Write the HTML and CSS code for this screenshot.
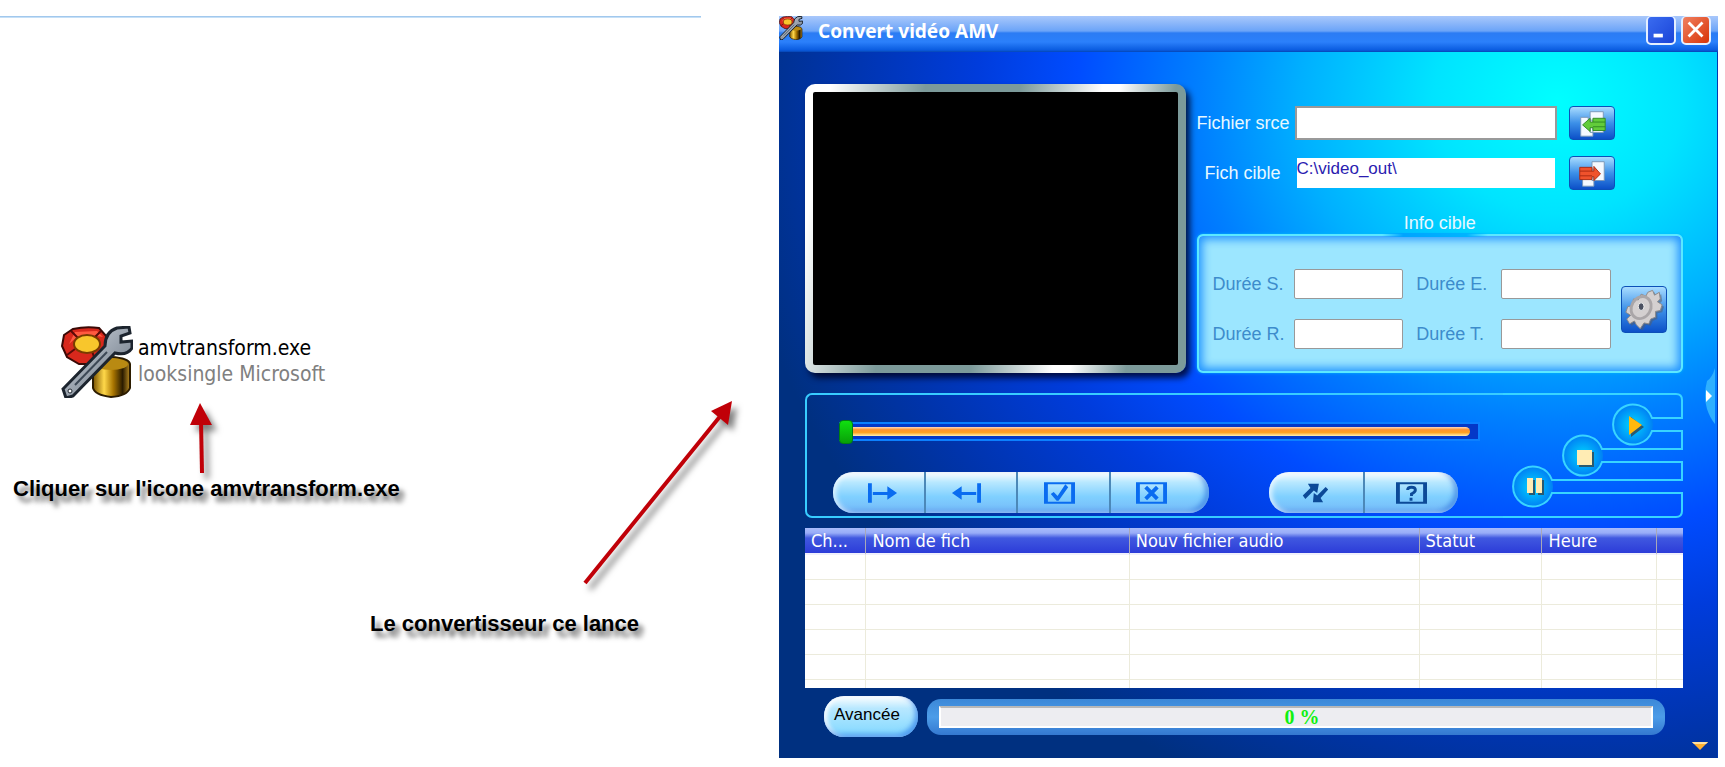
FILE: index.html
```html
<!DOCTYPE html>
<html lang="fr">
<head>
<meta charset="UTF-8" />
<meta name="viewport" content="width=device-width, initial-scale=1" />
<title>Convert vidéo AMV</title>
<link rel="stylesheet" href="styles.css">
</head>
<body>
<svg class="defs" aria-hidden="true">
  <defs>
    <linearGradient id="can" x1="0" x2="1">
      <stop offset="0" stop-color="#7a5200" />
      <stop offset="0.3" stop-color="#ffd84a" />
      <stop offset="0.55" stop-color="#a87400" />
      <stop offset="0.8" stop-color="#2a1b00" />
      <stop offset="1" stop-color="#b88a20" />
    </linearGradient>
    <linearGradient id="steel" x1="0" y1="0" x2="1" y2="1">
      <stop offset="0" stop-color="#d8dee6" />
      <stop offset="1" stop-color="#5e6a78" />
    </linearGradient>
    <radialGradient id="orb">
      <stop offset="0" stop-color="#00d8ff" />
      <stop offset="1" stop-color="#0080f4" />
    </radialGradient>
    <symbol id="app-icon" viewBox="0 0 72 72">
      <path d="M12 3 Q25 0 38 2 L47 12 L46 28 L36 38 L18 38 L6 31 L1 20 L3 9 Z" fill="#d8281c" stroke="#3a0906" stroke-width="2" />
      <path d="M14 6 L36 5 L42 11 L30 9 L16 11 L8 18 Z" fill="#ff5a40" />
      <path d="M10 5 L17 12 M40 5 L34 11 M6 29 L14 23 M35 37 L31 25" stroke="#5a0a08" stroke-width="2" />
      <ellipse cx="26" cy="18" rx="13" ry="9" fill="#f8c62c" stroke="#7a3c00" stroke-width="2" />
      <path d="M32 40 Q33 32 50 31 Q68 32 69 38 V62 Q66 70 50 71 Q34 69 32 62 Z" fill="url(#can)" stroke="#2c1c00" stroke-width="2" />
      <ellipse cx="50" cy="38" rx="17" ry="6" fill="#b98a12" />
      <path d="M2 63 L44 20 Q44 6 56 2 L68 1 L69 7 L60 10 L60 16 L71 15 L71 22 Q66 30 54 27 L12 70 L5 72 Z" fill="url(#steel)" stroke="#1c242e" stroke-width="3" />
      <path d="M14 59 L46 26" stroke="#3c4856" stroke-width="2" />
      <circle cx="9" cy="65" r="2" fill="#fff" stroke="#1c242e" />
    </symbol>
  </defs>
</svg>

<main class="page">
  <section class="desktop">
    <div class="file">
      <svg class="file-icon" aria-hidden="true"><use href="#app-icon" /></svg>
      <div class="file-text">
        <div>amvtransform.exe</div>
        <div class="file-vendor">looksingle Microsoft</div>
      </div>
    </div>
    <p class="caption">Cliquer sur l'icone amvtransform.exe</p>
    <p class="caption caption-launch">Le convertisseur ce lance</p>
    <svg class="arrows" viewBox="0 0 779 767" preserveAspectRatio="xMinYMin meet" aria-hidden="true">
      <path d="M202 473 L201 420" stroke-width="4" />
      <path d="M200 403 L212 425 L190 425 Z" class="arrow-head" />
      <path d="M585 583 L722 414" stroke-width="4" />
      <path d="M732 401 L728 425 L711 411 Z" class="arrow-head" />
    </svg>
  </section>

  <section class="window">
    <header class="titlebar">
      <svg class="title-icon" aria-hidden="true"><use href="#app-icon" /></svg>
      <h1>Convert vidéo AMV</h1>
      <button class="win-btn" type="button" aria-label="Réduire">
        <svg viewBox="0 0 28 28"><path d="M6 18 H16 V22 H6 Z" fill="#fff" /></svg>
      </button>
      <button class="win-btn win-close" type="button" aria-label="Fermer">
        <svg viewBox="0 0 28 28"><path d="M6 6 L21 21 M21 6 L6 21" stroke="#fff" stroke-width="3" /></svg>
      </button>
    </header>

    <div class="client">
      <div class="top">
        <div class="screen"></div>

        <div class="settings">
          <div class="path-row">
            <label for="src">Fichier srce</label>
            <input id="src" class="path" type="text">
            <button class="tool" type="button" aria-label="Ouvrir la source">
              <svg viewBox="0 0 46 34">
                <path d="M21 5 H35 V27 H21 Z M11 11 H19 V14 H24 V31 H11 Z" fill="#f4f9ff" stroke="#7a96b8" />
                <path d="M13 19 L21 12 V16 H24 V12 H37 V25 H24 V22 H21 V26 Z" fill="#62cc3a" stroke="#2f8a22" />
                <path d="M24 16 H37 M24 21 H37" stroke="#2f8a22" />
              </svg>
            </button>
          </div>
          <div class="path-row">
            <label for="dst">Fich cible</label>
            <input id="dst" class="path path-dst" type="text" value="C:\video_out\">
            <button class="tool" type="button" aria-label="Choisir la cible">
              <svg viewBox="0 0 46 34">
                <path d="M23 5 H36 V25 H23 Z M13 13 H25 V31 H13 Z" fill="#f4f9ff" stroke="#7a96b8" />
                <path d="M32 18 L25 10 V15 H23 V11 H10 V24 H23 V21 H25 V25 Z" fill="#f0522c" stroke="#a82a12" />
                <path d="M10 15 H23 M10 20 H23" stroke="#a82a12" />
              </svg>
            </button>
          </div>

          <fieldset class="info">
            <legend>Info cible</legend>
            <div class="info-box">
              <label for="ds">Durée S.</label><input id="ds" type="text">
              <label for="de" class="second">Durée E.</label><input id="de" type="text">
              <button class="tool gear" type="button" aria-label="Réglages">
                <svg viewBox="0 0 46 46">
                  <path d="M27 5 L32 3 L34 8 L39 5 L40 12 L37 15 L42 18 L40 24 L35 25 L35 31 L30 33 L28 38 L23 37 L19 43 L15 39 L13 35 L8 38 L5 33 L9 29 L4 26 L6 20 L11 19 L12 12 L17 13 L20 7 L25 9 Z" fill="#555b66" opacity="0.5" transform="translate(2 2)" />
                  <path d="M27 5 L32 3 L34 8 L39 5 L40 12 L37 15 L42 18 L40 24 L35 25 L35 31 L30 33 L28 38 L23 37 L19 43 L15 39 L13 35 L8 38 L5 33 L9 29 L4 26 L6 20 L11 19 L12 12 L17 13 L20 7 L25 9 Z" fill="#d4d0d0" stroke="#8c8888" />
                  <ellipse cx="20" cy="21" rx="10" ry="12" fill="none" stroke="#aaa6a8" stroke-width="3" transform="rotate(30 20 21)" />
                  <ellipse cx="20" cy="20" rx="3" ry="4" fill="#4a5060" stroke="#eee" />
                </svg>
              </button>
              <label for="dr">Durée R.</label><input id="dr" type="text">
              <label for="dt" class="second">Durée T.</label><input id="dt" type="text">
            </div>
          </fieldset>
        </div>
      </div>

      <div class="player">
        <div class="player-main">
          <div class="groove">
            <input class="seek" type="range" min="0" max="100" value="0" aria-label="Position">
          </div>
          <div class="toolbars">
            <div class="pill pill-edit">
              <button type="button" aria-label="Début">
                <svg viewBox="0 0 32 22"><path d="M1 1 H5 V21 H1 Z M6 10 H21 V4 L31 11 L21 18 V13 H6 Z" /></svg>
              </button>
              <button type="button" aria-label="Fin">
                <svg viewBox="0 0 32 22"><path d="M31 1 H27 V21 H31 Z M26 10 H11 V4 L1 11 L11 18 V13 H26 Z" /></svg>
              </button>
              <button type="button" aria-label="Valider">
                <svg viewBox="0 0 32 22"><path fill-rule="evenodd" d="M0 0 H32 V22 H0 Z M4 2 V20 H28 V2 Z" /><path d="M7 12 L10 10 L14 14 L22 2 L25 5 L15 19 H13 Z" /></svg>
              </button>
              <button type="button" aria-label="Annuler">
                <svg viewBox="0 0 32 22"><path fill-rule="evenodd" d="M0 0 H32 V22 H0 Z M4 2 V20 H28 V2 Z" /><path d="M10 5 L22 17 M22 5 L10 17" stroke="#0a6cf0" stroke-width="4" /></svg>
              </button>
            </div>
            <div class="pill pill-dark">
              <button type="button" aria-label="Convertir">
                <svg viewBox="0 0 32 26"><path d="M1 16 L10 7 L7 2 H20 L18 13 L14 10 L4 20 Z M31 9 L22 19 L25 24 H13 L14 13 L18 16 L28 6 Z" /></svg>
              </button>
              <button type="button" aria-label="Aide">
                <svg viewBox="0 0 32 22"><path fill-rule="evenodd" d="M0 0 H32 V22 H0 Z M4 2 V20 H28 V2 Z" /><path d="M12 8 Q12 5 16 5 Q20 5 20 8 Q20 10 16 12 V14" fill="none" stroke="#0c4a98" stroke-width="3" /><path d="M14 16 H17 V19 H14 Z" /></svg>
              </button>
            </div>
          </div>
        </div>
        <div class="player-side">
          <svg viewBox="0 0 180 125" aria-hidden="true">
            <g fill="url(#orb)">
              <circle cx="130" cy="32" r="20" />
              <circle cx="80" cy="63" r="20" />
              <circle cx="30" cy="94" r="20" />
            </g>
            <path class="frame" d="M0 1 H173 Q179 1 179 7 V25 H149 A20 20 0 1 0 149 38 H179 V56 H99 A20 20 0 1 0 99 69 H179 V87 H49 A20 20 0 1 0 49 100 H179 V118 Q179 124 173 124 H0" />
          </svg>
          <button class="orb orb-play" type="button" aria-label="Lecture">
            <svg viewBox="0 0 40 40"><path d="M18 12 L31 22 L18 32 Z" fill="#2a5a70" /><path d="M16 11 L29 20 L16 30 Z" fill="#ffb80c" /></svg>
          </button>
          <button class="orb orb-stop" type="button" aria-label="Arrêt">
            <svg viewBox="0 0 40 40"><path d="M16 16 H31 V31 H16 Z" fill="#2a5a70" /><path d="M14 14 H29 V29 H14 Z" fill="#ffecb4" /></svg>
          </button>
          <button class="orb orb-pause" type="button" aria-label="Pause">
            <svg viewBox="0 0 40 40"><path d="M16 13 H22 V28 H16 Z M25 13 H31 V28 H25 Z" fill="#2a5a70" /><path d="M14 11 H20 V26 H14 Z M23 11 H29 V26 H23 Z" fill="#ffecb4" /></svg>
          </button>
        </div>
      </div>

      <table class="queue">
        <colgroup>
          <col class="c-num"><col class="c-name"><col class="c-audio"><col class="c-state"><col class="c-time"><col>
        </colgroup>
        <thead>
          <tr><th>Ch...</th><th>Nom de fich</th><th>Nouv fichier audio</th><th>Statut</th><th>Heure</th><th></th></tr>
        </thead>
        <tbody>
          <tr><td></td><td></td><td></td><td></td><td></td><td></td></tr>
          <tr><td></td><td></td><td></td><td></td><td></td><td></td></tr>
          <tr><td></td><td></td><td></td><td></td><td></td><td></td></tr>
          <tr><td></td><td></td><td></td><td></td><td></td><td></td></tr>
          <tr><td></td><td></td><td></td><td></td><td></td><td></td></tr>
          <tr class="cut"><td></td><td></td><td></td><td></td><td></td><td></td></tr>
        </tbody>
      </table>

      <footer class="bottom">
        <button class="advanced" type="button">Avancée</button>
        <div class="progress">
          <div class="progress-bar" role="progressbar" aria-valuenow="0" aria-valuemin="0" aria-valuemax="100">0 %</div>
        </div>
      </footer>

      <button class="drawer" type="button" aria-label="Ouvrir le volet">
        <svg viewBox="0 0 12 56"><path d="M12 0 Q9 10 4 13 Q0 28 4 41 Q7 50 12 56 Z" fill="#2fb0ff" /><path d="M3 22 L9 28 L3 34 Z" fill="#fff" /></svg>
      </button>
      <button class="more" type="button" aria-label="Plus">
        <svg viewBox="0 0 16 8"><path d="M0 0 H16 L8 8 Z" fill="#ffb030" /><path d="M0 0 H16 L14 2 H2 Z" fill="#ffe0a0" /></svg>
      </button>
    </div>
  </section>
</main>
</body>
</html>
```

FILE: styles.css
```css
* {
  box-sizing: border-box;
}
body {
  margin: 0;
  background: #fff;
  font-family: "Liberation Sans", Arial, sans-serif;
  font-size: 18px;
  color: #000;
}
button {
  padding: 0;
  border: none;
  background: none;
  font: inherit;
  cursor: pointer;
}
svg {
  display: block;
}
.defs {
  position: absolute;
  width: 0;
  height: 0;
}
.page {
  display: grid;
  grid-template-columns: minmax(0, 779fr) minmax(0, 939fr);
  align-items: start;
  padding: 16px 7px 8px 0;
}

/* Desktop side */
.desktop {
  position: relative;
}
.desktop::before {
  content: "";
  display: block;
  width: 90%;
  height: 2px;
  background: linear-gradient(#8fbce8, #d8ecfc);
}
.file {
  display: flex;
  gap: 5px;
  padding: 308px 0 0 61px;
}
.file-icon {
  width: 72px;
  height: 72px;
}
.file-text {
  padding-top: 9px;
  font-family: "DejaVu Sans Condensed", "DejaVu Sans", Tahoma, sans-serif;
  font-size: 21px;
  line-height: 26px;
}
.file-vendor {
  color: #808080;
}
.caption {
  margin: 0;
  padding: 79px 0 0 13px;
  font-size: 22px;
  line-height: 24px;
  font-weight: 700;
  text-shadow: 5px 6px 5px rgba(0, 0, 0, 0.6);
}
.caption-launch {
  padding: 111px 0 0 370px;
}
.arrows {
  position: absolute;
  top: -16px;
  left: 0;
  width: 100%;
  fill: none;
  stroke: #c00008;
  filter: drop-shadow(5px 6px 3px rgba(0, 0, 0, 0.5));
  pointer-events: none;
}
.arrow-head {
  fill: #c00008;
  stroke: none;
}

/* Window */
.titlebar {
  display: flex;
  align-items: flex-start;
  height: 36px;
  padding-right: 7px;
  background: linear-gradient(#a9c8fb 0, #6ba4f8 15px, #2b7cf4 17px, #2b80fb 26px, #0a5ce0 34px, #0646b4 36px);
}
.title-icon {
  width: 24px;
  height: 24px;
  margin-right: 15px;
}
.titlebar h1 {
  flex: 1;
  margin: 0;
  font-family: "Noto Sans", sans-serif;
  font-size: 19px;
  line-height: 30px;
  color: #fff;
}
.win-btn {
  width: 30px;
  height: 29px;
  margin-left: 5px;
  border: 2px solid #e4efff;
  border-top-width: 1px;
  border-radius: 5px;
  background: linear-gradient(135deg, #3a6cf0, #1a44d8);
}
.win-close {
  background: linear-gradient(135deg, #f08060, #d83408);
}
.client {
  position: relative;
  padding: 32px 34px 21px 26px;
  border-right: 1px solid #0038b0;
  background: radial-gradient(830px 740px at 83% 50px, #00ffff 0, #00e4ff 15%, #00b0ff 31%, #0080ff 43%, #004cff 58%, #003cdc 70%, #0034ac 86%, #003080 100%);
}
.top {
  display: grid;
  grid-template-columns: minmax(0, 381fr) minmax(0, 487fr);
  column-gap: 11px;
}
.screen {
  border: 8px solid transparent;
  border-radius: 10px;
  background:
    linear-gradient(#000, #000) padding-box,
    linear-gradient(100deg, #fff 0, #fff 6%, #7c9a9a 28%, #7c9a9a 50%, #fff 69%, #fff 73%, #7c9a9a 86%) border-box;
  box-shadow: 4px 5px 6px rgba(0, 0, 30, 0.8);
}
.settings {
  min-width: 0;
  padding-top: 22px;
  color: #e8f8ff;
}
.path-row {
  display: grid;
  grid-template-columns: 98px minmax(0, 1fr) 46px;
  align-items: center;
  margin-bottom: 16px;
  padding-right: 68px;
}
.path-row label {
  padding-right: 6px;
  text-align: center;
  white-space: nowrap;
}
.path-row .tool {
  height: 34px;
}
.path {
  width: calc(100% - 12px);
  height: 34px;
  padding: 0 2px;
  border: 2px solid #999;
  background: #fff;
  font: inherit;
  font-size: 17px;
}
.path-dst {
  border-color: transparent;
  background-clip: padding-box;
  padding: 0 0 8px;
  color: #2a1cb0;
}
.tool {
  border: 1px solid #0c50b8;
  border-radius: 4px;
  background: linear-gradient(#a8dcff, #3c90e8 50%, #0c50c8);
}
.tool svg {
  width: 100%;
  height: 100%;
}
.info {
  min-width: 0;
  margin: 0;
  padding: 0;
  border: none;
}
.info legend {
  margin: 0 auto;
  padding: 7px 0 0;
  line-height: 21px;
}
.info-box {
  position: relative;
  display: grid;
  grid-template-columns: 81px minmax(0, 1fr) 98px minmax(0, 1fr) 56px;
  grid-template-rows: 30px 30px;
  row-gap: 20px;
  align-items: center;
  height: 139px;
  padding: 33px 14px;
  border: 2px solid #5ce8ff;
  border-radius: 6px;
  background: #9ce6ff;
  box-shadow: inset 0 0 10px 3px #1c90ff, 0 0 3px #00b8ff;
  color: #3c8ccc;
}
.info-box::before {
  content: "";
  position: absolute;
  top: -3px;
  left: 38%;
  width: 22%;
  height: 4px;
  background: linear-gradient(90deg, transparent, #00a4ff 20%, #00b4ff 80%, transparent);
}
.info-box input {
  width: 100%;
  height: 30px;
  border: 1px solid #999;
  border-radius: 2px;
  background: #fff;
  font: inherit;
}
.info-box .second {
  padding-left: 13px;
}
.gear {
  grid-column: 5;
  grid-row: 1 / 3;
  justify-self: end;
  width: 46px;
  height: 47px;
}

/* Player */
.player {
  display: flex;
  height: 125px;
  margin-top: 20px;
}
.player-main {
  flex: 1;
  min-width: 0;
  padding: 27px 23px 0 26px;
  border: 2px solid #38ccff;
  border-right: none;
  border-radius: 7px 0 0 7px;
}
.groove {
  margin-left: 6px;
  padding: 3px 8px 3px 0;
  border: 2px solid #0c80ff;
  border-left: none;
  background: #0438c8;
}
.seek {
  appearance: none;
  display: block;
  width: 100%;
  height: 9px;
  margin: 0;
  border-radius: 0 5px 5px 0;
  background: linear-gradient(#ffd8c0 0, #ff9430 30%, #ffa020 60%, #fff0b0 100%);
}
.seek::-webkit-slider-thumb {
  appearance: none;
  width: 14px;
  height: 24px;
  border: 1px solid #008010;
  border-radius: 4px;
  background: linear-gradient(#10e010, #08a008);
}
.toolbars {
  display: flex;
  justify-content: space-between;
  padding: 31px 22px 0 0;
}
.pill {
  display: flex;
  height: 41px;
  border-radius: 20px;
  overflow: hidden;
  background: linear-gradient(#fff 0, #b8e8ff 25%, #80d0ff 60%, #74b8f8 100%);
  box-shadow: inset 3px 0 5px rgba(255, 255, 255, 0.7), inset -4px -2px 5px rgba(40, 110, 220, 0.6);
}
.pill-edit {
  width: 376px;
}
.pill-edit button {
  padding-right: 8px;
}
.pill-edit button:first-child {
  padding: 0 0 0 8px;
}
.pill-edit button:last-child {
  padding-right: 16px;
}
.pill-dark {
  width: 189px;
}
.pill button {
  flex: 1 1 0;
  display: flex;
  align-items: center;
  justify-content: center;
}
.pill button + button {
  border-left: 2px solid #4c88b8;
}
.pill svg {
  flex: none;
  width: 31px;
  height: 22px;
  fill: #0a6cf0;
}
.pill-dark svg {
  fill: #0c4a98;
}
.player-side {
  position: relative;
  width: 180px;
}
.frame {
  fill: none;
  stroke: #38d4ff;
  stroke-width: 2;
}
.orb {
  position: absolute;
  width: 40px;
  height: 40px;
}
.orb-play {
  top: 12px;
  left: 110px;
}
.orb-stop {
  top: 43px;
  left: 60px;
}
.orb-pause {
  top: 74px;
  left: 10px;
}

/* File queue */
.queue {
  width: 100%;
  margin-top: 10px;
  table-layout: fixed;
  border-collapse: separate;
  border-spacing: 0;
  background: #fff;
  font-family: "DejaVu Sans Condensed", "DejaVu Sans", Tahoma, sans-serif;
}
.c-num { width: 7%; }
.c-name { width: 30%; }
.c-audio { width: 33%; }
.c-state { width: 14%; }
.c-time { width: 13%; }
.queue th {
  height: 27px;
  padding: 0 6px;
  border-right: 1px solid #a8a8b8;
  border-bottom: 2px solid #f0f0fc;
  background: linear-gradient(#a8bcfc 0, #98acf8 5px, #4058e0 10px, #2c3cd8 25px);
  color: #fff;
  font-weight: 400;
  line-height: 25px;
  text-align: left;
  white-space: nowrap;
}
.queue td {
  height: 25px;
  padding: 0;
  border-right: 1px solid #ecebdc;
  border-bottom: 1px solid #ecebdc;
}
.queue th:last-child,
.queue td:last-child {
  border-right: none;
}
.queue .cut td {
  height: 8px;
  border-bottom: none;
}

/* Bottom bar */
.bottom {
  display: flex;
  align-items: center;
  gap: 9px;
  margin-top: 8px;
  padding: 0 18px 0 19px;
}
.advanced {
  width: 94px;
  height: 41px;
  padding: 0 8px 4px 0;
  border-radius: 20px;
  background: linear-gradient(#fff 0, #b8e8ff 30%, #80d8ff 100%);
  box-shadow: inset -3px -3px 5px rgba(30, 110, 230, 0.6), inset 3px 0 4px #fff;
  font-size: 17px;
}
.progress {
  flex: 1;
  padding: 7px 12px;
  border-radius: 14px;
  background: linear-gradient(#3c88d8, #4c9ce8 50%, #3478d0);
}
.progress-bar {
  height: 22px;
  padding-left: 12px;
  border: 2px solid #fff;
  border-top-color: #b8b8b8;
  background: #ededf1;
  color: #10f010;
  font-family: "Liberation Serif", serif;
  font-size: 20px;
  font-weight: 700;
  line-height: 18px;
  text-align: center;
}
.drawer {
  position: absolute;
  top: 316px;
  right: 2px;
  width: 12px;
  height: 56px;
}
.more {
  position: absolute;
  right: 9px;
  bottom: 8px;
  width: 16px;
  height: 8px;
}
```
